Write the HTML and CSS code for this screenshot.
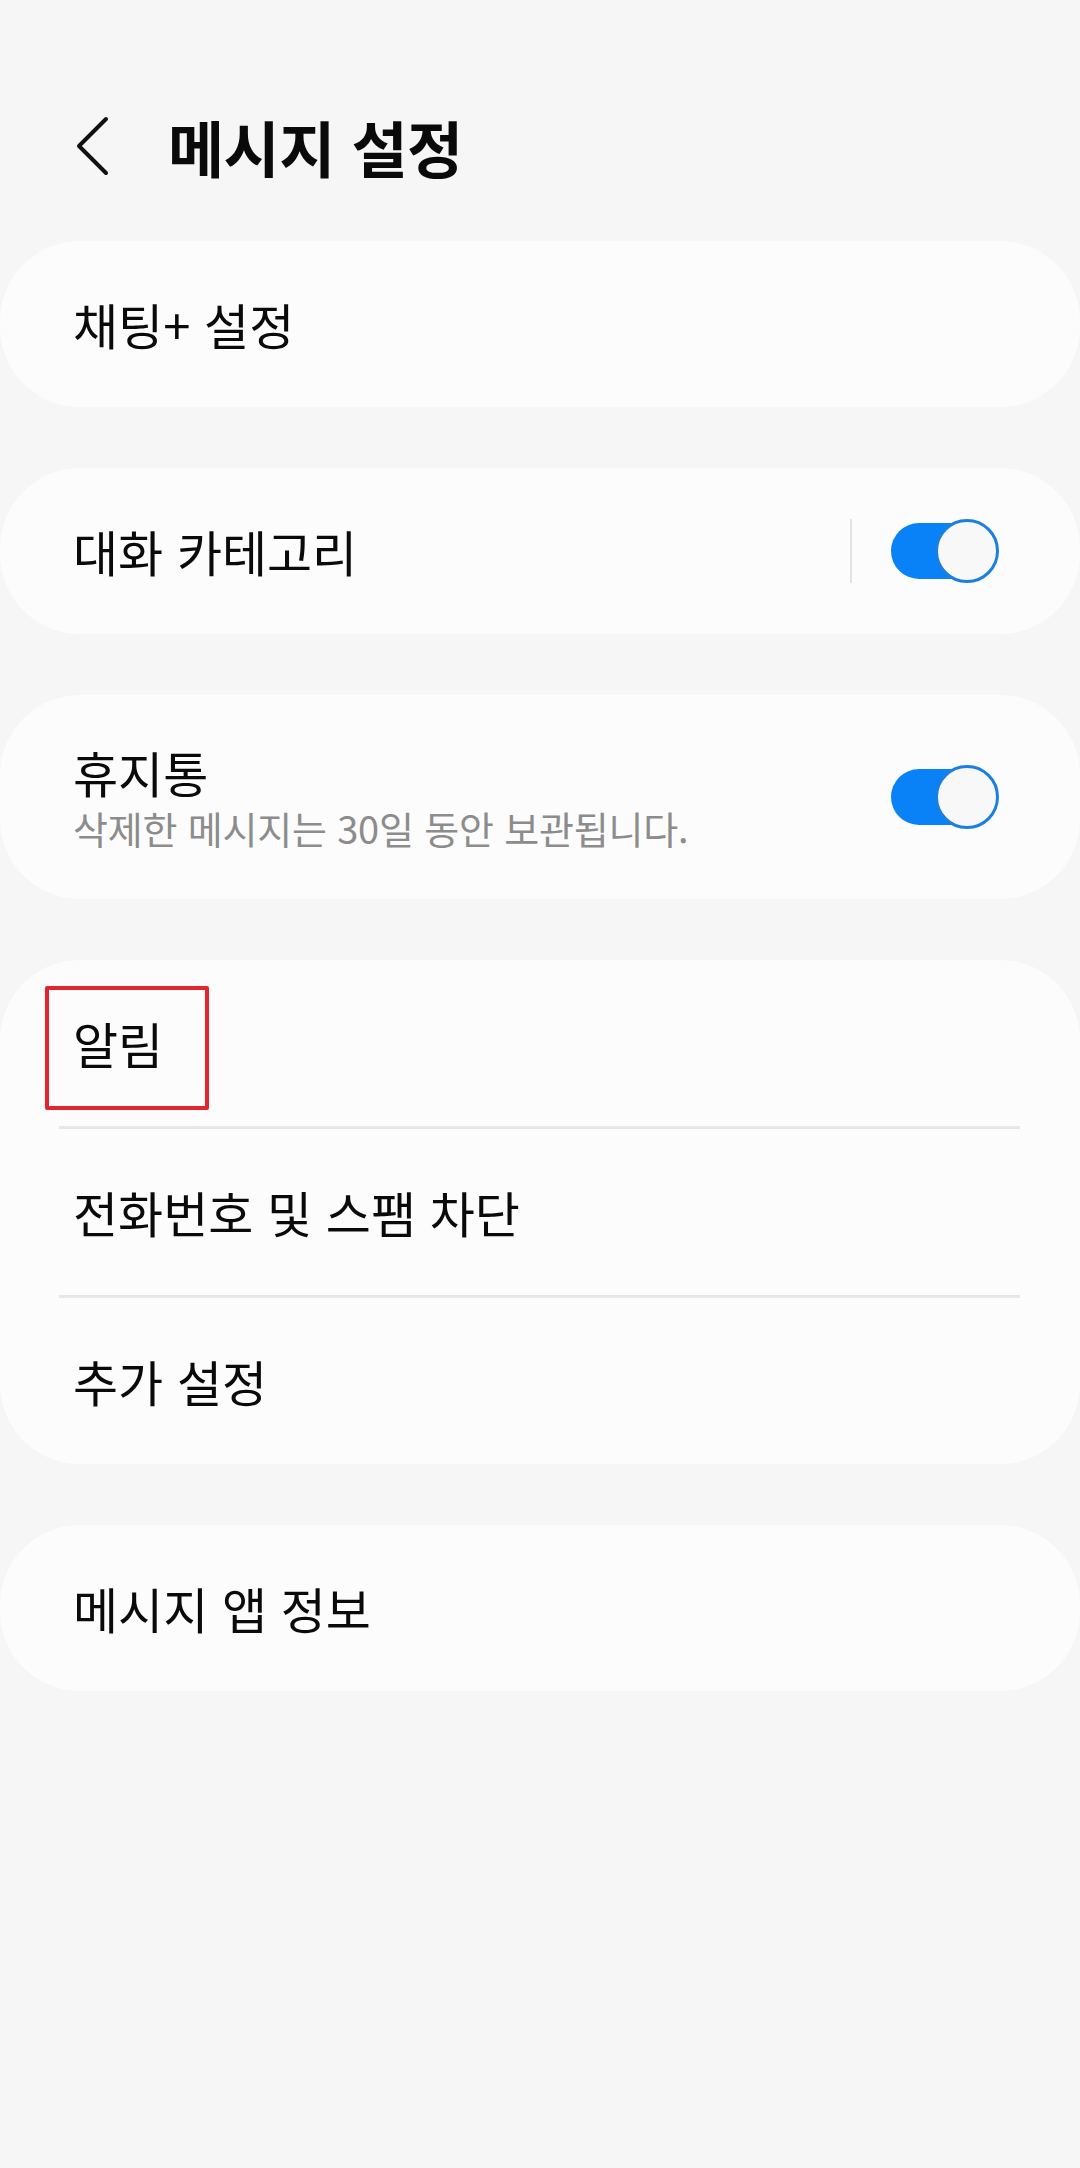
FILE: index.html
```html
<!DOCTYPE html>
<html lang="ko">
<head>
<meta charset="utf-8">
<title>메시지 설정</title>
<link rel="stylesheet" href="styles.css">
</head>
<body>
<div class="screen">
  <header class="appbar">
    <button class="back" aria-label="뒤로">
      <svg width="40" height="60" viewBox="0 0 40 60"><polyline points="32,3 5,30 32,57" fill="none" stroke="#111" stroke-width="4" stroke-linecap="round" stroke-linejoin="round"/></svg>
    </button>
    <h1 class="title">메시지 설정</h1>
  </header>

  <main class="list">
    <section class="card">
      <div class="row"><span class="label">채팅+ 설정</span></div>
    </section>

    <section class="card">
      <div class="row">
        <span class="label">대화 카테고리</span>
        <span class="vdivider"></span>
        <span class="switch"><span class="track"><span class="thumb"></span></span></span>
      </div>
    </section>

    <section class="card">
      <div class="row row-tall">
        <div class="texts">
          <span class="label">휴지통</span>
          <span class="sub">삭제한 메시지는 30일 동안 보관됩니다.</span>
        </div>
        <span class="switch"><span class="track"><span class="thumb"></span></span></span>
      </div>
    </section>

    <section class="card">
      <div class="row row-marked"><span class="label">알림</span><span class="mark"></span></div>
      <div class="hdivider"></div>
      <div class="row"><span class="label">전화번호 및 스팸 차단</span></div>
      <div class="hdivider"></div>
      <div class="row"><span class="label">추가 설정</span></div>
    </section>

    <section class="card">
      <div class="row"><span class="label">메시지 앱 정보</span></div>
    </section>
  </main>
</div>
</body>
</html>
```

FILE: styles.css
```css
html, body {
  margin: 0;
  padding: 0;
  background: #f6f6f6;
}

body {
  font-family: "Noto Sans CJK KR", "Noto Sans", sans-serif;
  color: #0c0c0c;
  width: 1080px;
  min-height: 2168px;
}

.appbar {
  display: flex;
  align-items: center;
  height: 110px;
  padding-top: 91px;
  margin-bottom: 40px;
}

.back {
  border: none;
  background: none;
  padding: 0;
  margin-left: 74px;
  width: 40px;
  height: 60px;
  display: flex;
}

.title {
  margin: 0 0 0 54px;
  font-size: 61px;
  font-weight: 700;
  letter-spacing: -0.5px;
  line-height: 1;
  color: #0a0a0a;
}

.list {
  display: flex;
  flex-direction: column;
  gap: 61px;
}

.card {
  background: #fcfcfc;
  border-radius: 80px;
  display: flex;
  flex-direction: column;
}

.row {
  height: 166px;
  display: flex;
  align-items: center;
  padding: 0 81px 0 73px;
  position: relative;
}

.row-tall {
  height: 204px;
}

.label {
  font-size: 49px;
  line-height: 58px;
  color: #0a0a0a;
  flex: 1;
}

.texts {
  flex: 1;
  display: flex;
  flex-direction: column;
  gap: 4px;
}

.sub {
  font-size: 38px;
  line-height: 46px;
  color: #8c8c8c;
  letter-spacing: -0.2px;
}

.vdivider {
  width: 2px;
  height: 64px;
  background: #e3e3e3;
  margin-right: 39px;
}

.switch {
  display: flex;
  align-items: center;
  width: 108px;
  height: 66px;
}

.track {
  width: 94px;
  height: 56px;
  border-radius: 28px;
  background: #0a82f7;
  display: flex;
  align-items: center;
  justify-content: flex-end;
}

.thumb {
  width: 64px;
  height: 64px;
  box-sizing: border-box;
  border-radius: 50%;
  border: 3px solid #1b7fe2;
  background: #f8f8f8;
  margin-right: -14px;
  flex: none;
}

.hdivider {
  height: 3px;
  background: #e7e7e7;
  margin: 0 60px 0 59px;
}

.mark {
  position: absolute;
  left: 45px;
  top: 26px;
  width: 164px;
  height: 124px;
  box-sizing: border-box;
  border: 4px solid #e2252f;
  border-radius: 2px;
}
```
